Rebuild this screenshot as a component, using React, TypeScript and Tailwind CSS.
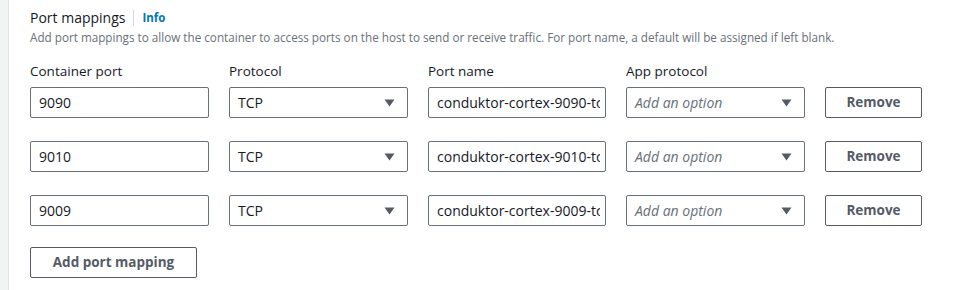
import { ChangeEvent, useState } from "react"

type Mapping = {
  port: string
  protocol: string
  name: string
}

const initial: Mapping[] = [
  { port: "9090", protocol: "TCP", name: "conduktor-cortex-9090-tcp" },
  { port: "9010", protocol: "TCP", name: "conduktor-cortex-9010-tcp" },
  { port: "9009", protocol: "TCP", name: "conduktor-cortex-9009-tcp" },
]

// small filled caret used by the selects
const Caret = () => (
  <svg width="11" height="8" viewBox="0 0 11 8" className="shrink-0">
    <path d="M0.5 0.5 H10.5 L5.5 7.5 Z" fill="#545b64" />
  </svg>
)

const Select = ({ value, placeholder }: { value?: string; placeholder?: string }) => (
  <div className="flex h-[31px] w-[179px] items-center justify-between rounded-[2px] border border-[#687078] bg-white pl-[8px] pr-[12px]">
    {value ? (
      <span className="text-[14px] text-[#16191f]">{value}</span>
    ) : (
      <span className="text-[14px] italic text-[#687078]">{placeholder}</span>
    )}
    <Caret />
  </div>
)

export default function App() {
  const [rows, setRows] = useState<Mapping[]>(initial)

  const update = (i: number, key: keyof Mapping) => (e: ChangeEvent<HTMLInputElement>) => {
    const next = [...rows]
    next[i] = { ...next[i], [key]: e.target.value }
    setRows(next)
  }

  return (
    <div
      className="flex h-[290px] w-[980px] bg-white"
      style={{ fontFamily: '"Open Sans", "Liberation Sans", sans-serif' }}
    >
      {/* gray gutter on the left */}
      <div className="w-[9px] shrink-0 border-r border-[#e1e4e4] bg-[#f2f3f3]" />

      <div className="flex-1 pl-[21px] pt-[8px]">
        <div className="flex items-center">
          <h2 className="text-[14px] leading-[20px] text-[#16191f]">Port mappings</h2>
          <span className="mx-[8px] h-[16px] w-px bg-[#d5dbdb]" />
          <a className="text-[11.5px] font-bold text-[#0073bb]">Info</a>
        </div>
        <p className="mt-[1px] text-[11.7px] leading-[16px] text-[#687078]">
          Add port mappings to allow the container to access ports on the host to send or receive traffic. For port
          name, a default will be assigned if left blank.
        </p>

        <div className="mt-[17px] flex gap-[20px] text-[13.5px] leading-[18px] text-[#16191f]">
          <span className="w-[179px]">Container port</span>
          <span className="w-[179px]">Protocol</span>
          <span className="w-[178px]">Port name</span>
          <span className="w-[179px]">App protocol</span>
        </div>

        <div className="mt-[7px] flex flex-col gap-[23px]">
          {rows.map((r, i) => (
            <div key={i} className="flex items-center gap-[20px]">
              <input
                value={r.port}
                onChange={update(i, "port")}
                className="h-[31px] w-[179px] rounded-[2px] border border-[#687078] px-[8px] text-[14px] text-[#16191f] outline-none"
              />
              <Select value={r.protocol} />
              <input
                value={r.name}
                onChange={update(i, "name")}
                className="h-[31px] w-[178px] rounded-[2px] border border-[#687078] pl-[8px] pr-[5px] text-[14px] text-[#16191f] outline-none"
              />
              <Select placeholder="Add an option" />
              <button
                type="button"
                onClick={() => setRows(rows.filter((_, j) => j !== i))}
                className="h-[31px] w-[97px] rounded-[2px] border border-[#545b64] bg-white text-[13.5px] font-bold text-[#545b64]"
              >
                Remove
              </button>
            </div>
          ))}
        </div>

        <button
          type="button"
          onClick={() => setRows([...rows, { port: "", protocol: "TCP", name: "" }])}
          className="mt-[21px] h-[31px] w-[167px] rounded-[2px] border border-[#545b64] bg-white text-[13.5px] font-bold text-[#545b64]"
        >
          Add port mapping
        </button>
      </div>
    </div>
  )
}
